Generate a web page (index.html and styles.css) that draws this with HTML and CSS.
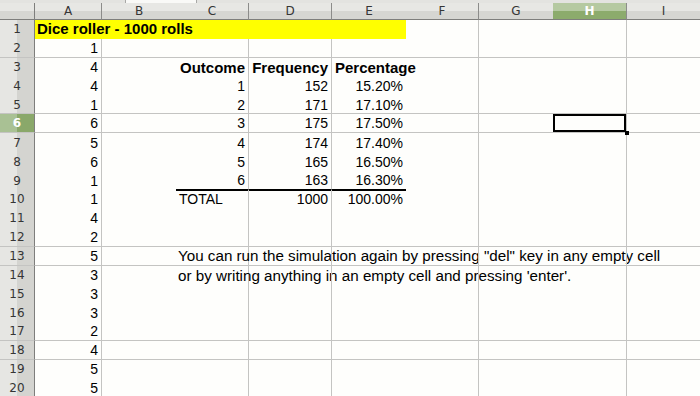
FILE: index.html
```html
<!DOCTYPE html>
<html lang="en">
<head>
    <meta charset="UTF-8">
    <meta name="viewport" content="width=device-width, initial-scale=1.0">
    <title>Dice roller</title>
    <link rel="stylesheet" href="styles.css">
</head>
<body>

    <div id="top-strip"><div class="thumb"></div></div>
    <div id="sheet"></div>

    <script src="script.js"></script>
</body>
</html>
```

FILE: styles.css
```css
:root {
    --sheet-background: #fefefc;
    --grid-line: #c4c4c2;
    --head-line: #7e7e7c;
    --head-light: #e7e7e4;
    --head-dark: #d6d6d2;
    --current-light: #b5c9a1;
    --current-dark: #8cab6c;
}

* {
    box-sizing: border-box;
}

body {
    margin: 0;
    overflow: hidden;
    background-color: var(--sheet-background);
    color: #000;
    font-family: "Liberation Sans", Arial, sans-serif;
    font-size: 14px;
}

#top-strip {
    height: 3px;
    background-color: #e3e3e0;
    padding-left: 125px;
}

.thumb {
    width: 72px;
    height: 3px;
    background-color: #f9f9f7;
    border-left: 1px solid #a8a8a6;
    border-right: 1px solid #a8a8a6;
}

#sheet {
    display: grid;
    grid-template-columns: 35px 67px 74px 73px 83px 74px 73px 74px 74px 73px;
    grid-template-rows: 17px repeat(20, 18.9px);
}

/* headers */
.corner, .col-head, .row-head {
    display: flex;
    align-items: center;
    justify-content: center;
    font-family: "DejaVu Sans", sans-serif;
    font-size: 12px;
    color: #353535;
}

.corner {
    background: linear-gradient(var(--head-light) 50%, var(--head-dark) 50%);
    border-right: 1px solid var(--head-line);
    border-bottom: 1px solid var(--head-line);
}

.col-head {
    background: linear-gradient(var(--head-light) 50%, var(--head-dark) 50%);
    border-bottom: 1px solid var(--head-line);
}

.col-head.rule {
    border-right: 1px solid #8c8c8a;
}

.col-head.current {
    background: linear-gradient(var(--current-light) 50%, var(--current-dark) 50%);
    color: #fff;
    font-weight: bold;
}

.row-head {
    background: linear-gradient(to right, #e6e6e3 50%, #d4d4d0 50%);
    border-right: 1px solid var(--head-line);
}

.row-head.current {
    background: linear-gradient(to right, #a9c194 50%, #8aa86a 50%);
    color: #fff;
    font-weight: bold;
}

.under {
    border-bottom: 1px solid var(--grid-line);
}

/* cells */
.cell {
    display: flex;
    align-items: center;
    min-width: 0;
    padding: 0 3px;
    white-space: nowrap;
}

.cell.rule {
    border-right: 1px solid var(--grid-line);
}

.cell.right {
    justify-content: flex-end;
}

.cell.bold {
    font-weight: bold;
    font-size: 15px;
}

.cell.note {
    font-size: 15.2px;
    padding-left: 2px;
}

.title {
    grid-column: span 5;
    background-color: #ffff00;
    font-weight: bold;
    font-size: 15px;
    padding-left: 2px;
}

.total {
    border-bottom: 1px solid #000;
    box-shadow: 0 1px 0 #000;
}

.selected {
    position: relative;
    z-index: 1;
    box-shadow: inset 0 0 0 2px #000;
}

.selected::after {
    content: "";
    position: absolute;
    right: -3px;
    bottom: -3px;
    width: 4px;
    height: 4px;
    background-color: #000;
}
```

FILE: script.js
```js
const columns = ['A', 'B', 'C', 'D', 'E', 'F', 'G', 'H', 'I'];
const ruledCols = ['A', 'C', 'D', 'F', 'H'];   // grid line on the right edge
const ruledRows = [2, 5, 6, 12, 13, 17, 18];   // grid line under the row
const current = { col: 'H', row: 6 };

const rolls = [1, 4, 4, 1, 6, 5, 6, 1, 1, 4, 2, 5, 3, 3, 3, 2, 4, 5, 5];
const counts = [152, 171, 175, 174, 165, 163];

const cells = {
    C3: { text: 'Outcome', cls: 'bold right' },
    D3: { text: 'Frequency', cls: 'bold right' },
    E3: { text: 'Percentage', cls: 'bold' },
    C10: { text: 'TOTAL' },
    D10: { text: '1000', cls: 'right' },
    E10: { text: '100.00%', cls: 'right' },
    C13: { text: 'You can run the simulation again by pressing "del" key in any empty cell', cls: 'note' },
    C14: { text: 'or by writing anything in an empty cell and pressing \'enter\'.', cls: 'note' }
};

rolls.forEach((v, i) => {
    cells['A' + (i + 2)] = { text: String(v), cls: 'right' };
});

counts.forEach((n, i) => {
    const row = i + 4;
    const total = row === 9 ? ' total' : '';
    cells['C' + row] = { text: String(i + 1), cls: 'right' + total };
    cells['D' + row] = { text: String(n), cls: 'right' + total };
    cells['E' + row] = { text: (n / 10).toFixed(2) + '%', cls: 'right' + total };
});

const sheet = document.getElementById('sheet');

function addCell(cls, text) {
    const el = document.createElement('div');
    el.className = cls;
    if (text) el.textContent = text;
    sheet.appendChild(el);
    return el;
}

addCell('corner');
columns.forEach(c => {
    let cls = 'col-head';
    if (ruledCols.includes(c)) cls += ' rule';
    if (c === current.col) cls += ' current';
    addCell(cls, c);
});

for (let r = 1; r <= 20; r++) {
    const under = ruledRows.includes(r) ? ' under' : '';
    addCell('row-head' + under + (r === current.row ? ' current' : ''), String(r));

    columns.forEach((c, i) => {
        if (r === 1 && i === 0) {
            addCell('title', 'Dice roller - 1000 rolls');
            return;
        }
        if (r === 1 && i < 5) return; // A1:E1 is one block

        const data = cells[c + r] || {};
        let cls = 'cell' + under;
        if (ruledCols.includes(c)) cls += ' rule';
        if (data.cls) cls += ' ' + data.cls;
        if (c === current.col && r === current.row) cls += ' selected';
        addCell(cls, data.text);
    });
}
```
